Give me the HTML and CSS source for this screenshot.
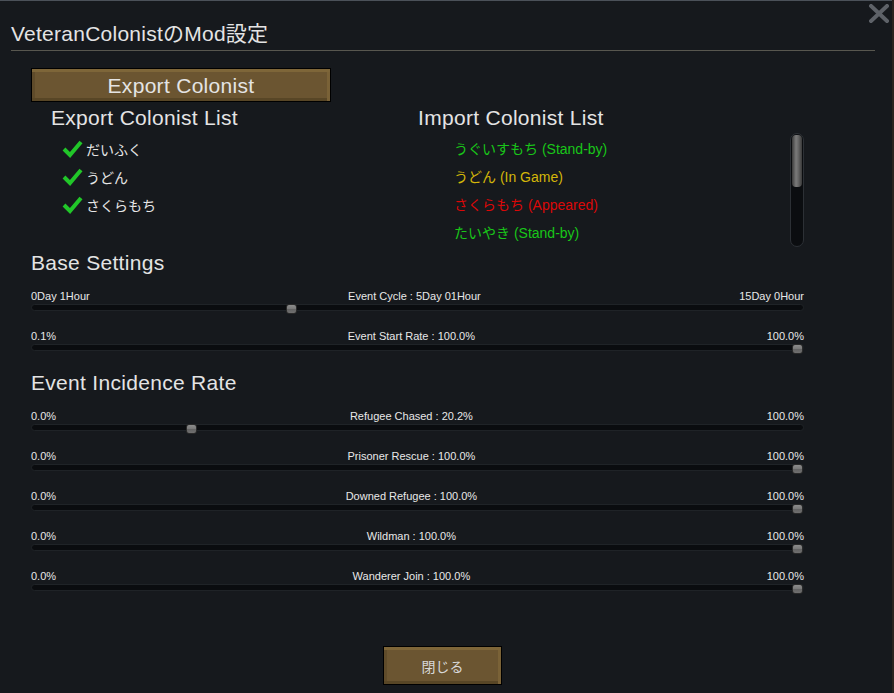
FILE: index.html
```html
<!DOCTYPE html>
<html lang="ja">
<head>
<meta charset="utf-8">
<title>VeteranColonistのMod設定</title>
<link rel="stylesheet" href="styles.css">
</head>
<body>
<div class="window">
  <div class="close-x">
    <svg width="20" height="19" viewBox="0 0 20 19"><path d="M2 2 L18 17 M18 2 L2 17" stroke="#5e6268" stroke-width="4" stroke-linecap="square"/></svg>
  </div>
  <div class="title">VeteranColonistのMod設定</div>
  <div class="content">
    <div class="btn export-btn">Export Colonist</div>
    <div class="lists">
      <div class="col left-col">
        <div class="heading sub">Export Colonist List</div>
        <ul class="export-list">
          <li><svg class="check" width="21" height="19" viewBox="0 0 21 19"><path d="M2 10 L8 16 L19 3" fill="none" stroke="#21c629" stroke-width="4"/></svg><span>だいふく</span></li>
          <li><svg class="check" width="21" height="19" viewBox="0 0 21 19"><path d="M2 10 L8 16 L19 3" fill="none" stroke="#21c629" stroke-width="4"/></svg><span>うどん</span></li>
          <li><svg class="check" width="21" height="19" viewBox="0 0 21 19"><path d="M2 10 L8 16 L19 3" fill="none" stroke="#21c629" stroke-width="4"/></svg><span>さくらもち</span></li>
        </ul>
      </div>
      <div class="col right-col">
        <div class="heading sub">Import Colonist List</div>
        <div class="import-box">
          <ul class="import-list">
            <li class="green">うぐいすもち (Stand-by)</li>
            <li class="yellow">うどん (In Game)</li>
            <li class="red">さくらもち (Appeared)</li>
            <li class="green">たいやき (Stand-by)</li>
          </ul>
          <div class="scrollbar"><div class="scroll-thumb"></div></div>
        </div>
      </div>
    </div>

    <div class="heading section">Base Settings</div>
    <div class="slider-row">
      <div class="labels"><span>0Day 1Hour</span><span>Event Cycle : 5Day 01Hour</span><span>15Day 0Hour</span></div>
      <div class="track"><div class="thumb" style="left: calc(0.334 * (100% - 11px))"></div></div>
    </div>
    <div class="slider-row">
      <div class="labels"><span>0.1%</span><span>Event Start Rate : 100.0%</span><span>100.0%</span></div>
      <div class="track"><div class="thumb" style="left: calc(1 * (100% - 11px))"></div></div>
    </div>

    <div class="heading section">Event Incidence Rate</div>
    <div class="slider-row">
      <div class="labels"><span>0.0%</span><span>Refugee Chased : 20.2%</span><span>100.0%</span></div>
      <div class="track"><div class="thumb" style="left: calc(0.202 * (100% - 11px))"></div></div>
    </div>
    <div class="slider-row">
      <div class="labels"><span>0.0%</span><span>Prisoner Rescue : 100.0%</span><span>100.0%</span></div>
      <div class="track"><div class="thumb" style="left: calc(1 * (100% - 11px))"></div></div>
    </div>
    <div class="slider-row">
      <div class="labels"><span>0.0%</span><span>Downed Refugee : 100.0%</span><span>100.0%</span></div>
      <div class="track"><div class="thumb" style="left: calc(1 * (100% - 11px))"></div></div>
    </div>
    <div class="slider-row">
      <div class="labels"><span>0.0%</span><span>Wildman : 100.0%</span><span>100.0%</span></div>
      <div class="track"><div class="thumb" style="left: calc(1 * (100% - 11px))"></div></div>
    </div>
    <div class="slider-row">
      <div class="labels"><span>0.0%</span><span>Wanderer Join : 100.0%</span><span>100.0%</span></div>
      <div class="track"><div class="thumb" style="left: calc(1 * (100% - 11px))"></div></div>
    </div>
  </div>
  <div class="footer">
    <div class="btn close-btn">閉じる</div>
  </div>
</div>
</body>
</html>
```

FILE: styles.css
```css
* { box-sizing: border-box; }
html, body {
  margin: 0;
  padding: 0;
  background: #2b2420;
  width: 894px;
  height: 693px;
  overflow: hidden;
}
body {
  font-family: "Liberation Sans", "Noto Sans CJK JP", sans-serif;
  color: #e2e2e2;
}
.window {
  position: relative;
  width: 892px;
  height: 693px;
  background: #16191d;
  border-top: 1px solid #4b5159;
  padding: 0 0 0 11px;
}
.close-x {
  position: absolute;
  top: 3px;
  right: 3px;
  width: 20px;
  height: 19px;
}
.close-x svg { display: block; }
.title {
  width: 864px;
  height: 50px;
  padding-top: 19px;
  font-size: 21px;
  letter-spacing: 0.25px;
  line-height: 28px;
  color: #e4e4e4;
  border-bottom: 1px solid #58574f;
}
.content {
  width: 773px;
  margin-left: 20px;
  padding-top: 17px;
}
.btn {
  display: flex;
  align-items: center;
  justify-content: center;
  color: #e4e4e4;
  background: #6b5531;
  border: 1px solid #000;
  box-shadow: inset 0 3px 0 #7e6639, inset -3px 0 0 #7a6237, inset 0 -3px 0 #584626, inset 3px 0 0 #5f4b2a;
}
.export-btn {
  width: 300px;
  height: 34px;
  font-size: 21px;
  letter-spacing: 0.3px;
  padding-top: 2px;
}
.lists {
  display: flex;
  height: 148px;
  padding-top: 4px;
}
.col { display: flex; flex-direction: column; }
.left-col { width: 387px; padding-left: 20px; }
.right-col { flex: 1; }
.heading {
  font-size: 21px;
  letter-spacing: 0.3px;
  line-height: 24px;
  color: #e4e4e4;
}
.sub { height: 27px; }
ul { list-style: none; margin: 0; padding: 0; }
.export-list { padding-left: 11px; margin-top: 2px; }
.export-list li {
  display: flex;
  align-items: center;
  height: 28px;
  font-size: 14px;
  color: #e6e6e6;
}
.check { display: block; margin-right: 3px; margin-top: -2px; }
.import-box {
  display: flex;
  justify-content: space-between;
}
.import-list { padding-left: 36px; margin-top: 2px; }
.import-list li {
  height: 28px;
  line-height: 28px;
  font-size: 14px;
}
.green { color: #19c619; }
.yellow { color: #d3b609; }
.red { color: #db0808; }
.scrollbar {
  width: 14px;
  height: 114px;
  background: #0b0d10;
  border: 1px solid #2c3035;
  border-radius: 7px;
  padding: 1px 1px;
}
.scroll-thumb {
  width: 10px;
  height: 52px;
  border-radius: 4px;
  background: linear-gradient(to right, #3a3a3a, #7a7a7a 40%, #6a6a6a 60%, #3a3a3a);
}
.section {
  margin-top: 1px;
  height: 39px;
}
.slider-row {
  height: 40px;
  display: flex;
  flex-direction: column;
}
.labels {
  display: flex;
  justify-content: space-between;
  font-size: 11px;
  line-height: 12px;
  height: 14px;
  color: #e8e8e8;
}
.track {
  position: relative;
  height: 7px;
  background: #0a0c0f;
  border: 1px solid #1f2327;
  border-radius: 4px;
}
.thumb {
  position: absolute;
  top: -1px;
  width: 11px;
  height: 10px;
  border-radius: 3px;
  background: linear-gradient(to bottom, #8c8c8c, #7a7a7a 45%, #646464 55%, #707070);
  border: 1px solid #2a2a2a;
}
.footer {
  display: flex;
  padding-left: 372px;
  padding-top: 36px;
}
.close-btn {
  width: 119px;
  height: 39px;
  font-size: 14px;
  font-family: "Noto Sans CJK JP", sans-serif;
  color: #d8d8d8;
}
```
